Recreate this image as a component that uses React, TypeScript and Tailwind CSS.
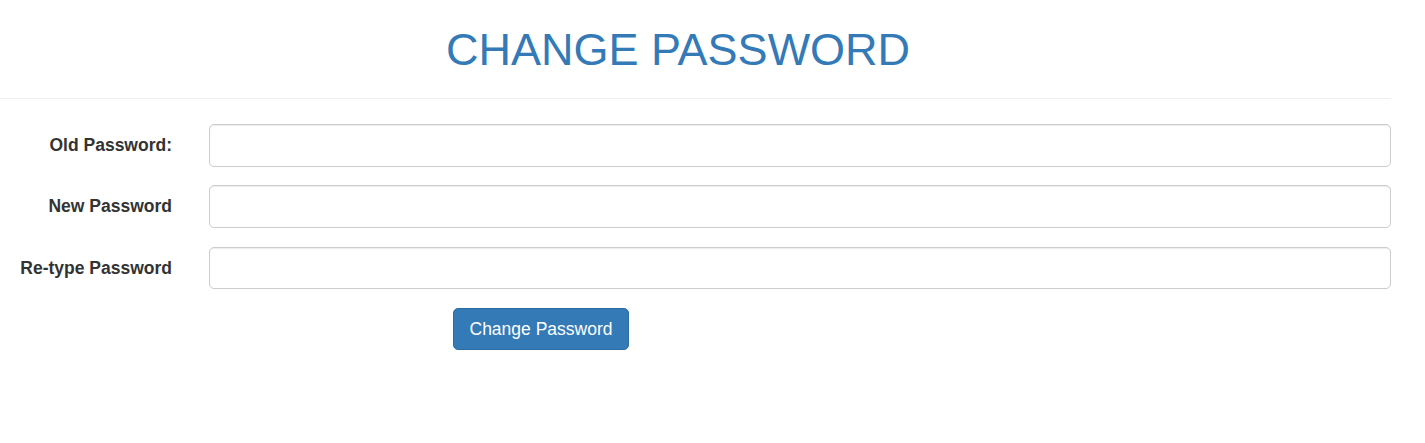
import type { JSX } from 'react';

const fields = ['Old Password:', 'New Password', 'Re-type Password'];

export default function App(): JSX.Element {
  return (
    <div className="min-h-[443px] w-full bg-white font-['Liberation_Sans',Arial,sans-serif] text-[#333]">
      <div className="w-[1391px]">
        <div className="w-[1356px] pt-[25px]">
          <h1 className="text-center text-[45px] leading-[50px] font-normal text-[#337ab7]">
            CHANGE PASSWORD
          </h1>
        </div>
        <hr className="mt-[23px] border-0 border-t border-[#eee]" />
        <form className="mt-[25px] flex flex-col gap-[18.75px]">
          {fields.map((label) => (
            <div key={label} className="flex items-center">
              <label className="w-[172px] shrink-0 text-right text-[17.5px] font-bold">
                {label}
              </label>
              <input
                type="password"
                className="ml-[37px] h-[42.5px] flex-1 rounded-[5px] border border-[#ccc] bg-white px-[15px] shadow-[inset_0_1px_1px_rgba(0,0,0,0.075)] outline-none"
              />
            </div>
          ))}
          <div className="flex pl-[453px]">
            <button
              type="button"
              className="h-[42.5px] w-[176px] rounded-[5px] border border-[#2e6da4] bg-[#337ab7] text-[17.5px] text-white"
            >
              Change Password
            </button>
          </div>
        </form>
      </div>
    </div>
  );
}
